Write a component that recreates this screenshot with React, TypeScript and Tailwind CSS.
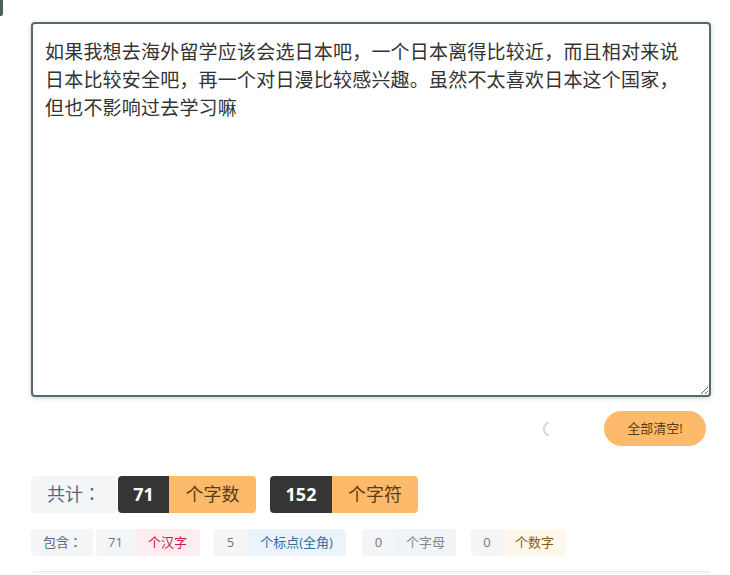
import React from "react";

const text =
  "如果我想去海外留学应该会选日本吧，一个日本离得比较近，而且相对来说日本比较安全吧，再一个对日漫比较感兴趣。虽然不太喜欢日本这个国家，但也不影响过去学习嘛";

const font = { fontFamily: "'Open Sans', 'Noto Sans CJK SC', sans-serif" };
const jp = { fontFamily: "'Open Sans', 'Noto Sans CJK JP', sans-serif" };

function Sub({
  num,
  label,
  cls,
  nw,
  lw,
}: {
  num: string;
  label: string;
  cls: string;
  nw: string;
  lw: string;
}) {
  return (
    <div className="flex h-[27px] overflow-hidden rounded-[4px] text-[13px] leading-[27px]">
      <span className={"bg-[#f4f5f6] text-center text-[#777] " + nw}>{num}</span>
      <span className={"text-center " + lw + " " + cls}>{label}</span>
    </div>
  );
}

export default function App() {
  return (
    <div className="relative min-h-[575px] w-[730px] bg-white" style={font}>
      <div className="absolute left-0 top-0 h-[16px] w-[3px] rounded-br-[2px] bg-[#4e5f60]" />
      <div className="w-[711px] pl-[31px] pt-[22px]">
        <textarea
          defaultValue={text}
          className="block h-[375px] w-[680px] resize-y rounded-[4px] border-2 border-[#566a6b] bg-white pb-[12px] pl-[12px] pr-[26px] pt-[14px] text-[19px] leading-[28px] tracking-[0.2px] text-[#333] shadow-[0_1px_4px_rgba(90,120,120,0.35)] outline-none"
          style={font}
        />
        <div className="mt-[14px] flex h-[35px] items-center justify-end pr-[5px]">
          <svg width="14" height="16" viewBox="0 0 14 16" className="mr-[52px]">
            <path d="M10 2 A6.5 6.5 0 0 0 10 14" fill="none" stroke="#d5d8da" strokeWidth="2" strokeLinecap="round" />
          </svg>
          <button className="h-[35px] w-[102px] rounded-full bg-[#fdba6b] text-[13px] text-[#5b3d12]">
            全部清空!
          </button>
        </div>
        <div className="mt-[30px] flex items-center">
          <div className="flex h-[37px] items-center">
            <span
              className="h-[37px] w-[86px] rounded-[4px] bg-[#f4f5f6] text-center text-[18px] leading-[37px] text-[#5b6682]"
              style={jp}
            >
              共计：
            </span>
            <span className="ml-px flex h-[37px] overflow-hidden rounded-[4px] text-[18px] leading-[37px]">
              <span className="w-[51px] bg-[#353535] text-center font-bold text-white">71</span>
              <span className="w-[87px] bg-[#fdba6b] text-center text-[#5b3d12]">个字数</span>
            </span>
          </div>
          <span className="ml-[14px] flex h-[37px] overflow-hidden rounded-[4px] text-[18px] leading-[37px]">
            <span className="w-[62px] bg-[#353535] text-center font-bold text-white">152</span>
            <span className="w-[86px] bg-[#fdba6b] text-center text-[#5b3d12]">个字符</span>
          </span>
        </div>
        <div className="mt-[16px] flex items-center">
          <span
            className="h-[27px] w-[62px] rounded-[4px] bg-[#f4f5f6] pl-[12px] text-[13px] leading-[27px] text-[#5b6682]"
            style={jp}
          >
            包含：
          </span>
          <div className="ml-[3px]">
            <Sub num="71" label="个汉字" cls="bg-[#fdedf1] text-[#c51f45]" nw="w-[39px]" lw="w-[65px]" />
          </div>
          <div className="ml-[14px]">
            <Sub num="5" label="个标点(全角)" cls="bg-[#ecf4fb] text-[#2f6e98]" nw="w-[33px]" lw="w-[99px]" />
          </div>
          <div className="ml-[16px]">
            <Sub num="0" label="个字母" cls="bg-[#f1f4f6] text-[#7c8895]" nw="w-[33px]" lw="w-[61px]" />
          </div>
          <div className="ml-[15px]">
            <Sub num="0" label="个数字" cls="bg-[#fef7ec] text-[#8a5a12]" nw="w-[32px]" lw="w-[63px]" />
          </div>
        </div>
        <div className="mt-[15px] h-[20px] w-[680px] rounded-t-[4px] border-t border-[#ececec] bg-[#f7f7f7]" />
      </div>
    </div>
  );
}
